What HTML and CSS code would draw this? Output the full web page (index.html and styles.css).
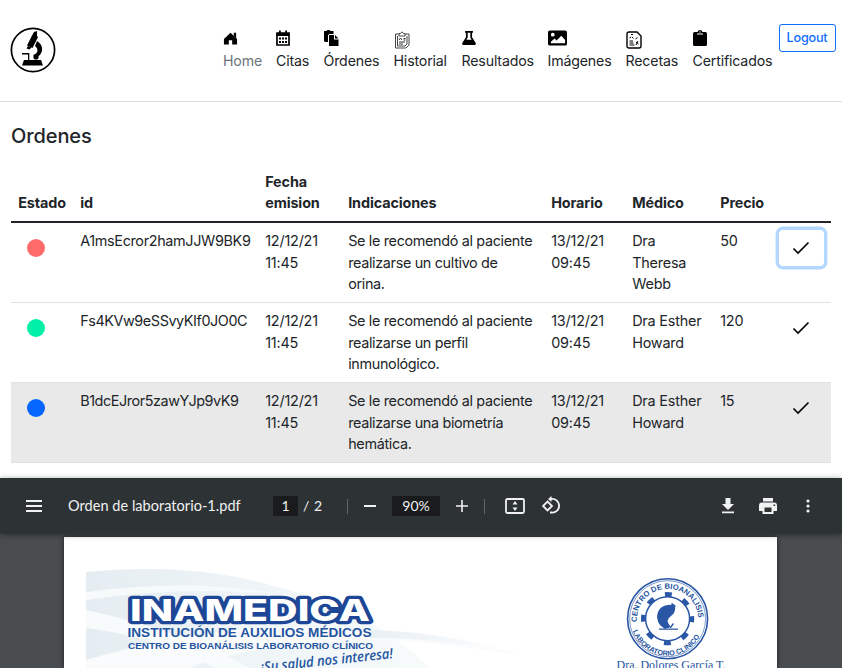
FILE: index.html
```html
<!DOCTYPE html>
<html lang="es">
<head>
<meta charset="utf-8">
<title>Ordenes</title>
<link rel="stylesheet" href="styles.css">
</head>
<body>
<div class="app">
<header class="topbar">
  <svg class="logo" viewBox="0 0 46 46"><circle cx="23" cy="23" r="21.6" fill="none" stroke="#000" stroke-width="1.7"/><path d="M24 5l3-1v5l1 1-5.500 11-5.500-2.500 5-10z"/><path d="M18 19l3.500 1.500-2 2-3-1zM27 14c7 4 7 13-1 17l-3-3c5-1 6-6 2-9z"/><path d="M12 26h7v1.500h-7zM18 26h1.300v8h-1.300z"/><circle cx="26" cy="30" r="2.600"/><path d="M14 33h17l2 5.500H12z"/></svg>
  <nav class="nav">
    <a class="home"><svg viewBox="0 0 16 16"><path d="M8 2.500l7 6.500v6H9.800v-4.500H6.200V15H1V9zM11.500 2.500H14v5.500l-2.500-2.500z"/></svg><span>Home</span></a>
    <a class="citas"><svg viewBox="0 0 16 16"><path d="M2 3h12v12H2z" fill="none" stroke="#000" stroke-width="1.700"/><path d="M1.500 3h13v3h-13zM4 .5h1.800V4H4zM10.200.5H12V4h-1.800zM4 7.500h2v2H4zM7 7.500h2v2H7zM10 7.500h2v2h-2zM4 11h2v2H4zM7 11h2v2H7zM10 11h2v2h-2z"/></svg><span>Citas</span></a>
    <a class="ordenes"><svg viewBox="0 0 16 16"><path d="M1 1h2.500l1-1h2l1 1h3v3H6.200L5 5.200V12H2l-1-1z"/><path d="M6 5h5v4.500h4.500V16H6zM12 5l3.500 3.500H12z"/></svg><span>Órdenes</span></a>
    <a class="historial"><svg viewBox="0 0 16 18"><g fill="none" stroke="#333" stroke-width=".9"><path d="M5 3H1.500v14H12l3-3V3h-4M3.500 5v10h7.500l2-2V5M5 5V2.500h1.500L8 .8l1.500 1.700H11V5z"/><path d="M5 9l1.500-2L8 9M9.500 7.500h2M9.500 9h2M5 11h6M5 13h4" stroke-width="1"/></g></svg><span>Historial</span></a>
    <a class="resultados"><svg viewBox="0 0 16 16"><path fill-rule="evenodd" d="M3.500 0h9v2h-1v5l4 6.500c.8 1.400 0 2.500-1.500 2.500H2c-1.500 0-2.300-1.100-1.500-2.500l4-6.500V2h-1zM6.500 2v5.500L5 10h6L9.500 7.500V2z"/></svg><span>Resultados</span></a>
    <a class="imagenes"><svg viewBox="0 0 20 16"><path fill-rule="evenodd" d="M2 0h16q2 0 2 2v12q0 2-2 2H2q-2 0-2-2V2q0-2 2-2zM5 2.500a2 2 0 1 0 0 4 2 2 0 0 0 0-4zM3 13.500h15V10l-4-4.500-5 5-2-2-4 3.500z"/></svg><span>Imágenes</span></a>
    <a class="recetas"><svg viewBox="0 0 16 18"><path d="M3 1h8l4 4v10q0 2-2 2H3q-2 0-2-2V3q0-2 2-2z" fill="none" stroke="#000" stroke-width="1.400"/><path d="M3.500 7l1.500-1M5 3.500h2M6 6l1.500 1.500M9.500 8l2-1.500M3.500 10H7M3.500 12h4M3.500 14h5M10 11l2.500 2M12 10l-2 4" fill="none" stroke="#000" stroke-width="1"/></svg><span>Recetas</span></a>
    <a class="certificados"><svg viewBox="0 0 14 16"><path fill-rule="evenodd" d="M1.500 2H4.500Q5 0 7 0t2.500 2h3Q14 2 14 3.500v11q0 1.500-1.500 1.500h-11Q0 16 0 14.500v-11Q0 2 1.500 2zM4 3.500v1h6v-1zM7 1.200a.7.700 0 1 0 0 1.400.7.700 0 0 0 0-1.400z"/></svg><span>Certificados</span></a>
  </nav>
  <button class="logout">Logout</button>
</header>
<main class="content">
  <h1>Ordenes</h1>
  <table>
    <colgroup><col class="c-estado"><col class="c-id"><col class="c-fecha"><col class="c-ind"><col class="c-hor"><col class="c-med"><col class="c-pre"><col></colgroup>
    <thead><tr><th>Estado</th><th>id</th><th>Fecha<br>emision</th><th>Indicaciones</th><th>Horario</th><th>Médico</th><th>Precio</th><th></th></tr></thead>
    <tbody>
      <tr><td><i class="dot red"></i></td><td class="id">A1msEcror2hamJJW9BK9</td><td>12/12/21<br>11:45</td><td class="note">Se le recomendó al paciente<br>realizarse un cultivo de<br>orina.</td><td>13/12/21<br>09:45</td><td>Dra<br>Theresa<br>Webb</td><td>50</td><td class="action"><button class="check focus"><svg viewBox="0 0 18 14"><path d="M1.500 7.500l4.500 4.500L16.500 1.500"/></svg></button></td></tr>
      <tr><td><i class="dot green"></i></td><td class="id wide">Fs4KVw9eSSvyKIf0JO0C</td><td>12/12/21<br>11:45</td><td class="note">Se le recomendó al paciente<br>realizarse un perfil<br>inmunológico.</td><td>13/12/21<br>09:45</td><td>Dra Esther<br>Howard</td><td>120</td><td class="action"><button class="check"><svg viewBox="0 0 18 14"><path d="M1.500 7.500l4.500 4.500L16.500 1.500"/></svg></button></td></tr>
      <tr class="active"><td><i class="dot blue"></i></td><td class="id wide">B1dcEJror5zawYJp9vK9</td><td>12/12/21<br>11:45</td><td class="note">Se le recomendó al paciente<br>realizarse una biometría<br>hemática.</td><td>13/12/21<br>09:45</td><td>Dra Esther<br>Howard</td><td>15</td><td class="action"><button class="check"><svg viewBox="0 0 18 14"><path d="M1.500 7.500l4.500 4.500L16.500 1.500"/></svg></button></td></tr>
    </tbody>
  </table>
</main>
<section class="viewer">
  <div class="toolbar">
    <svg class="menu" viewBox="0 0 16 12"><path d="M0 0h16v2H0zM0 5h16v2H0zM0 10h16v2H0z"/></svg>
    <span class="filename">Orden de laboratorio-1.pdf</span>
    <span class="page-no">1</span><span class="slash">/</span><span class="total">2</span>
    <i class="sep"></i>
    <svg class="minus" viewBox="0 0 12 12"><path d="M0 5h12v2H0z"/></svg>
    <span class="zoom">90%</span>
    <svg class="plus" viewBox="0 0 12 12"><path d="M0 5.200h12v1.600H0zM5.200 0h1.600v12H5.200z"/></svg>
    <i class="sep second"></i>
    <svg class="fit" viewBox="0 0 20 16"><rect x="1" y="1" width="18" height="14" rx="1.500" fill="none" stroke="#f1f1f1" stroke-width="1.800"/><path d="M10 3l2.500 3.500h-5zM10 13l2.500-3.500h-5z"/></svg>
    <svg class="rotate" viewBox="0 0 18 18"><path d="M5.500 5.500L10 10l-4.500 4.500L1 10zM8 3h1.500a6.800 6.800 0 1 1 0 13.500H8" fill="none" stroke="#f1f1f1" stroke-width="1.800"/><path d="M9.500 0v6l-3.500-3z"/></svg>
    <span class="spacer"></span>
    <svg class="download" viewBox="0 0 12 16"><path d="M3.500 0h5v6H12l-6 6-6-6h3.500zM0 13.500h12v1.700H0z"/></svg>
    <svg class="print" viewBox="0 0 18 16"><path fill-rule="evenodd" d="M4 0h10v3.500H4zM3 4.500h12q3 0 3 3V13h-3.500v3h-11v-3H0V7.500q0-3 3-3zM5.500 9.500V14h7V9.500zM14.500 6.500v1.600h1.600V6.500z"/></svg>
    <svg class="more" viewBox="0 0 4 14"><circle cx="2" cy="2" r="1.600"/><circle cx="2" cy="7" r="1.600"/><circle cx="2" cy="12" r="1.600"/></svg>
  </div>
  <div class="canvas">
    <div class="sheet">
      <svg class="letterhead" viewBox="64 537 713 131">
        <defs>
          <linearGradient id="haze" x1="86" x2="400" y1="0" y2="0" gradientUnits="userSpaceOnUse"><stop offset="0" stop-color="#e5edf2"/><stop offset=".5" stop-color="#eef4f7"/><stop offset="1" stop-color="#f6fafb"/></linearGradient>
          <linearGradient id="ribbon" x1="370" x2="520" y1="0" y2="0" gradientUnits="userSpaceOnUse"><stop offset="0" stop-color="#e8eff4"/><stop offset="1" stop-color="#fff"/></linearGradient>
          <path id="arcTop" d="M637 622A30.700 30.700 0 1 1 698.200 622"/>
          <path id="arcBottom" d="M632.500 630A36.500 36.500 0 0 0 703 627"/>
        </defs>
        <path d="M86 572Q190 562 270 585Q370 608 430 668H86z" fill="url(#haze)"/>
        <path d="M86 592Q190 578 280 594Q180 586 86 600z" fill="#f7fafb"/>
        <path d="M86 610Q180 630 250 668H215Q150 635 86 628z" fill="#f8fbfc"/>
        <path d="M86 660Q240 615 370 631Q450 633 520 655Q440 642 370 640Q240 645 190 668H86z" fill="#f9fbfc"/>
        <path d="M370 630Q450 632 520 655Q450 638 370 638z" fill="url(#ribbon)"/>
        <text class="brand" x="130" y="620.700" textLength="240" lengthAdjust="spacingAndGlyphs">INAMEDICA</text>
        <text class="line1" x="127.500" y="637.300" textLength="244" lengthAdjust="spacingAndGlyphs">INSTITUCIÓN DE AUXILIOS MÉDICOS</text>
        <text class="line2" x="128" y="648.700" textLength="245" lengthAdjust="spacingAndGlyphs">CENTRO DE BIOANÁLISIS LABORATORIO CLÍNICO</text>
        <text class="slogan" transform="translate(261 672) rotate(-6)" textLength="133" lengthAdjust="spacingAndGlyphs">¡Su salud nos interesa!</text>
        <g fill="none" stroke="#2956a5"><circle cx="667.600" cy="618.700" r="40" stroke-width="1.600"/><circle cx="667.600" cy="618.700" r="38" stroke-width=".6"/><circle cx="667.600" cy="618.700" r="22" stroke-width="1.500"/><circle cx="667.600" cy="618.700" r="24.200" stroke-width="4.800" stroke-dasharray="7 12.007" stroke-dashoffset="3.500"/></g>
        <path d="M675 605q-17-2-18 12q1 10 10 12h3v-3q-5-6 1-10q5-3 4-11zM659 628.500h19v1.300h-19zM669 628l4-5 1 1-3 4zM671 604l4 3 1-1-4-3z" fill="#2956a5"/>
        <text class="seal"><textPath href="#arcTop">CENTRO DE BIOANALISIS</textPath></text>
        <text class="seal low"><textPath href="#arcBottom" startOffset="1">LABORATORIO CLINICO</textPath></text>
        <text class="doctor" x="616.500" y="669" textLength="109" lengthAdjust="spacingAndGlyphs">Dra. Dolores García T.</text>
      </svg>
    </div>
  </div>
</section>
</div>
</body>
</html>
```
FILE: styles.css
```css
* { box-sizing: border-box; }
body { margin: 0; background: #fff; color: #212529; font-family: Inter, "Liberation Sans", sans-serif; font-size: 14.4px; line-height: 21.6px; overflow: hidden; }
.app { width: 842px; height: 668px; display: flex; flex-direction: column; overflow: hidden; }
.topbar { height: 102px; flex: none; display: flex; align-items: flex-start; border-bottom: 1px solid #d9dfe4; padding-left: 10px; }
.logo { width: 46px; height: 46px; margin-top: 27px; }
.nav { display: flex; margin: 30px 0 0 167px; }
.nav a { display: flex; flex-direction: column; height: 42px; font-size: 14.2px; letter-spacing: -.17px; white-space: nowrap; }
.nav svg { height: 16px; width: 16px; flex: none; margin: 0 0 4px -1px; }
.nav .home { width: 53px; color: #6c757d; }
.nav .home svg { width: 15px; margin-left: 0; }
.nav .citas { width: 47.500px; }
.nav .ordenes { width: 70px; }
.nav .historial { width: 68px; }
.nav .historial svg, .nav .recetas svg { height: 18px; margin: 1px 0; }
.nav .resultados { width: 86px; }
.nav .resultados svg { width: 14px; margin-left: 0; }
.nav .imagenes { width: 78px; }
.nav .imagenes svg { width: 19px; margin-left: 0; }
.nav .recetas { width: 67px; }
.nav .recetas svg { width: 16px; }
.nav .certificados { width: 86px; }
.nav .certificados svg { width: 14px; margin-left: 0; }
.logout { margin: 24px 0 0; width: 57px; height: 28px; padding: 0 0 2px; border: 1px solid #0d6efd; border-radius: 3px; background: #fff; color: #0d6efd; font: 500 12.600px Inter, sans-serif; letter-spacing: -.2px; }
.content { padding: 21px 11px 0; height: 376px; flex: none; }
h1 { font-size: 20px; line-height: 26px; font-weight: 500; letter-spacing: -.1px; margin: 0 0 14px; }
table { width: 820px; table-layout: fixed; border-collapse: separate; border-spacing: 0; margin-top: 0; }
.c-estado { width: 62px; } .c-id { width: 185px; } .c-fecha { width: 83px; } .c-ind { width: 203px; } .c-hor { width: 81px; } .c-med { width: 88px; } .c-pre { width: 56px; }
th, td { text-align: left; padding: 7px 7.200px; white-space: nowrap; vertical-align: top; letter-spacing: -.2px; }
th { height: 60px; vertical-align: bottom; border-bottom: 2px solid #212529; font-weight: 700; letter-spacing: -.12px; }
td { height: 80px; border-bottom: 1px solid #dee2e6; line-height: 21.500px; }
td.id { letter-spacing: -.34px; }
td.wide { letter-spacing: -.43px; }
td.note { letter-spacing: -.34px; }
.active td { background: #e9e9e9; }
.dot { display: block; width: 18px; height: 18px; border-radius: 50%; margin: 9px 0 0 8.800px; }
.red { background: #ff6b6b; } .green { background: #00f0a8; } .blue { background: #0565ff; }
td.action { padding: 7px; }
.check { display: flex; align-items: center; justify-content: center; width: 45px; height: 36px; margin: 0 0 0 3px; padding: 0; border: 0; background: transparent; border-radius: 4px; }
.check svg { width: 18px; height: 14px; fill: none; stroke: #000; stroke-width: 1.600; margin: 0 1px 1px 0; }
.focus { box-shadow: 0 0 0 3.400px #b3d7ff; }
.viewer { flex: none; width: 842px; height: 190px; background: #4a4d50; color: #f1f1f1; font-family: Lato, sans-serif; }
.toolbar { height: 56px; background: #2d3235; display: flex; align-items: center; padding: 0 32px 0 26px; box-shadow: 0 1px 6px rgba(0,0,0,.4); position: relative; font-size: 14px; }
.toolbar svg { fill: #f1f1f1; flex: none; }
.menu { width: 16px; height: 12px; }
.filename { margin-left: 26px; width: 205px; white-space: nowrap; font-size: 14.500px; letter-spacing: .04px; }
.page-no { width: 25px; height: 20px; line-height: 20px; background: #191b1c; text-align: center; }
.slash { width: 16px; padding-left: 5px; } .total { width: 33px; }
.sep { width: 1px; height: 15px; background: #626669; }
.minus { width: 12px; height: 12px; margin: 0 16px; }
.zoom { width: 48px; height: 20px; line-height: 20px; background: #191b1c; text-align: center; }
.plus { width: 12px; height: 12px; margin: 0 16px; }
.fit { width: 20px; height: 16px; margin-left: 20px; }
.rotate { width: 18px; height: 18px; margin: 0 0 2px 17px; }
.spacer { flex: 1; }
.download { width: 12px; height: 16px; }
.print { width: 18px; height: 16px; margin: 0 29px 0 25px; }
.more { width: 4px; height: 14px; }
.canvas { height: 134px; padding: 3px 64px 0; }
.sheet { width: 713px; height: 131px; background: #fff; box-shadow: 0 0 5px rgba(0,0,0,.6); }
.letterhead { display: block; width: 713px; height: 131px; }
.letterhead text { fill: #2454a0; font-family: "Liberation Sans", sans-serif; }
.letterhead .brand { font: 800 30.500px Inter, sans-serif; fill: #fff; stroke: #1d4697; stroke-width: 6.400px; stroke-linejoin: round; paint-order: stroke; }
.letterhead .line1 { font-size: 12.200px; font-weight: 700; }
.letterhead .line2 { font-size: 9.600px; font-weight: 700; }
.letterhead .slogan { font: italic 600 14px "Open Sans", sans-serif; }
.letterhead .seal { font-size: 7.700px; font-weight: 700; }
.letterhead .low { font-size: 7.200px; }
.letterhead .doctor { font: 12.500px "Liberation Serif", serif; }
```
